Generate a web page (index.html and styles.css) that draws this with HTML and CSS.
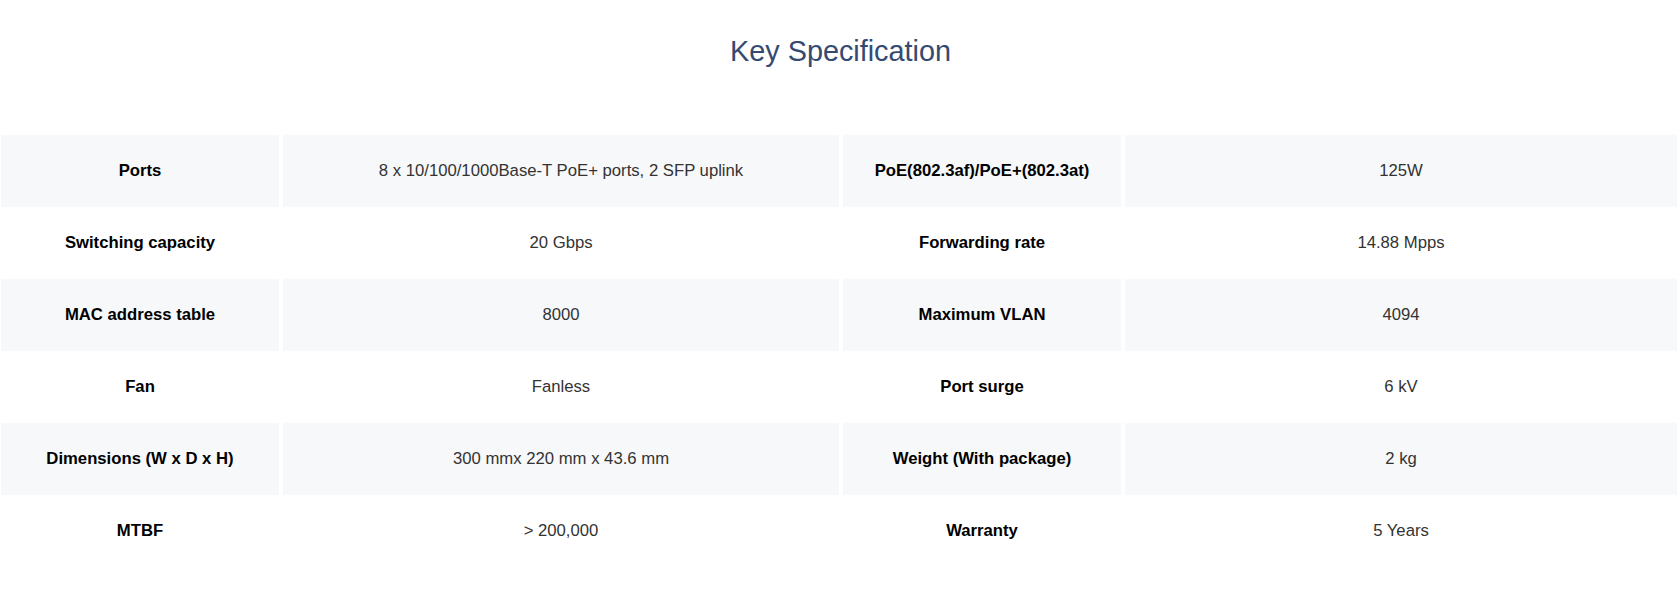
FILE: index.html
```html
<!DOCTYPE html>
<html>
<head>
<meta charset="utf-8">
<link rel="stylesheet" href="styles.css">
</head>
<body>
<section class="spec">
  <h2 class="spec-title">Key Specification</h2>
  <div class="spec-table">
    <div class="spec-row shaded">
      <div class="cell label">Ports</div>
      <div class="cell value">8 x 10/100/1000Base-T PoE+ ports, 2 SFP uplink</div>
      <div class="cell label">PoE(802.3af)/PoE+(802.3at)</div>
      <div class="cell value">125W</div>
    </div>
    <div class="spec-row">
      <div class="cell label">Switching capacity</div>
      <div class="cell value">20 Gbps</div>
      <div class="cell label">Forwarding rate</div>
      <div class="cell value">14.88 Mpps</div>
    </div>
    <div class="spec-row shaded">
      <div class="cell label">MAC address table</div>
      <div class="cell value">8000</div>
      <div class="cell label">Maximum VLAN</div>
      <div class="cell value">4094</div>
    </div>
    <div class="spec-row">
      <div class="cell label">Fan</div>
      <div class="cell value">Fanless</div>
      <div class="cell label">Port surge</div>
      <div class="cell value">6 kV</div>
    </div>
    <div class="spec-row shaded">
      <div class="cell label">Dimensions (W x D x H)</div>
      <div class="cell value">300 mmx 220 mm x 43.6 mm</div>
      <div class="cell label">Weight (With package)</div>
      <div class="cell value">2 kg</div>
    </div>
    <div class="spec-row">
      <div class="cell label">MTBF</div>
      <div class="cell value">&gt; 200,000</div>
      <div class="cell label">Warranty</div>
      <div class="cell value">5 Years</div>
    </div>
  </div>
</section>
</body>
</html>
```

FILE: styles.css
```css
html, body {
  margin: 0;
  padding: 0;
  background: #ffffff;
  font-family: "Liberation Sans", Arial, sans-serif;
}

.spec {
  width: 1677px;
  height: 613px;
  overflow: hidden;
}

.spec-title {
  margin: 0;
  padding-top: 31px;
  padding-left: 4px;
  height: 135px;
  box-sizing: border-box;
  text-align: center;
  font-size: 28.8px;
  font-weight: 400;
  line-height: 40px;
  color: #344a70;
}

.spec-table {
  display: flex;
  flex-direction: column;
  padding-left: 1px;
}

.spec-row {
  display: grid;
  grid-template-columns: 278px 556px 278px 1fr;
  column-gap: 4px;
  height: 72px;
}

.cell {
  display: flex;
  align-items: center;
  justify-content: center;
  text-align: center;
  font-size: 16.7px;
}

.shaded .cell {
  background: #f7f8fa;
}

.label {
  font-weight: 700;
  color: #000000;
}

.value {
  color: #333333;
}
```
